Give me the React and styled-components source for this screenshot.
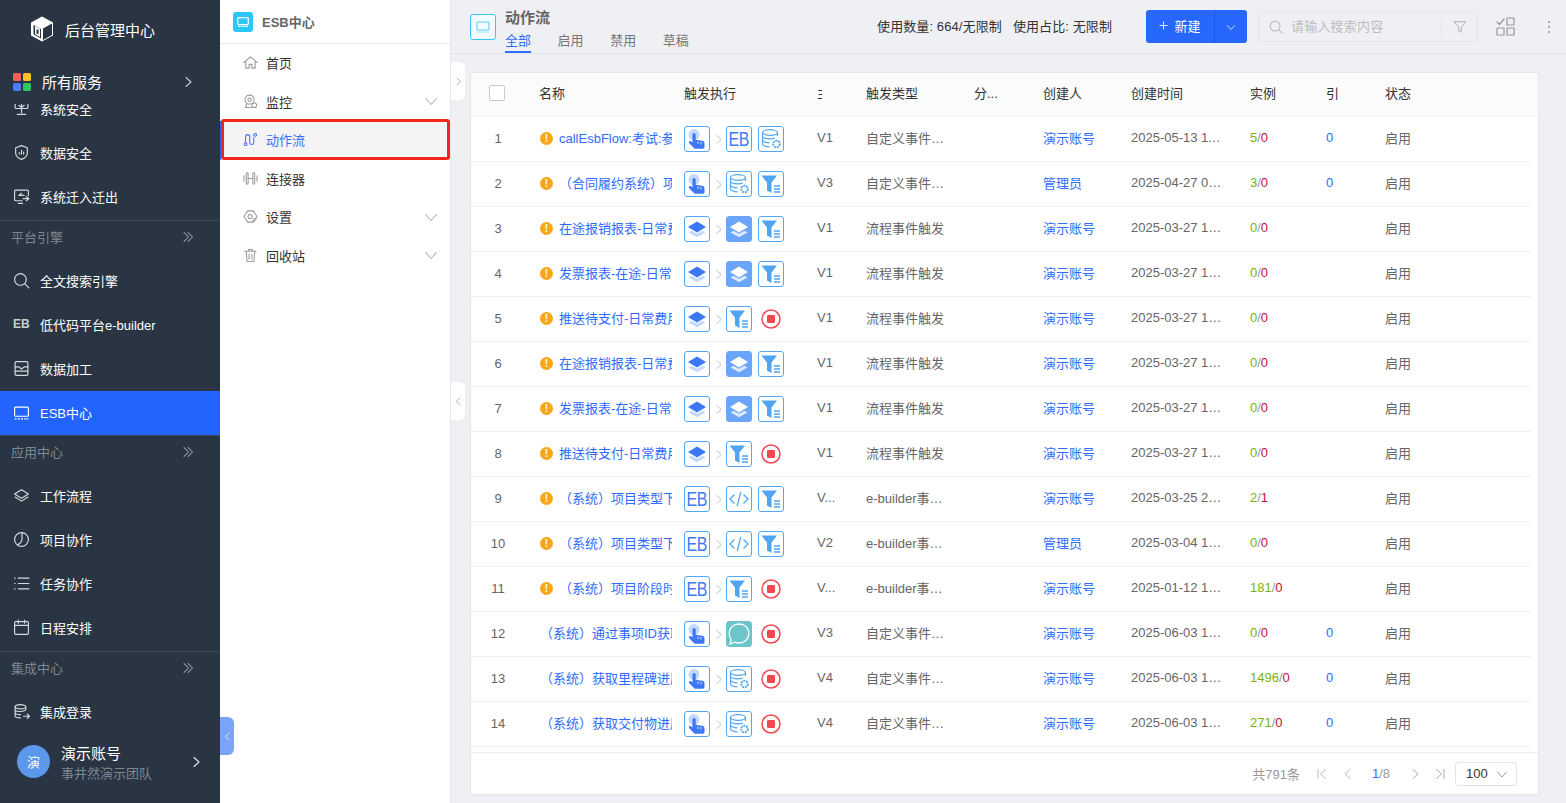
import React from 'react';
import styled, { createGlobalStyle, css } from 'styled-components';

const Global = createGlobalStyle`
  html, body { margin: 0; padding: 0; height: 100%; overflow: hidden; }
  body { font-family: "Liberation Sans", "Noto Sans CJK SC", sans-serif; font-size: 13px; color: #333; }
  * { box-sizing: border-box; }
`;

const Page = styled.div`position: relative; display: flex; width: 1566px; height: 803px; overflow: hidden; background: #eff0f4;`;

/* ---------- primary sidebar ---------- */
const Side = styled.aside`width: 220px; height: 100%; flex: none; display: flex; flex-direction: column; background: #293543; color: #fff;`;
const Brand = styled.div`height: 60px; flex: none; display: flex; align-items: center; gap: 11px; padding: 0 0 0 30px; font-size: 15px; span { padding-bottom: 2px; }`;
const AllServices = styled.div`height: 44px; flex: none; display: flex; align-items: center; padding: 0 26px 0 13px; font-size: 15px; gap: 11px;`;
const Grow = styled.span`flex: 1; padding-bottom: ${p => p.$up || 0}px;`;
const Quad = styled.span`display: grid; grid-template-columns: 8px 8px; gap: 2px; width: 18px; height: 18px;
  i { display: block; border-radius: 1.5px; }`;
const Scroll = styled.nav`flex: 1; min-height: 0; overflow: hidden;`;
const ScrollInner = styled.div`margin-top: -17px;`;
const NavRow = styled.div`height: 44px; display: flex; align-items: center; gap: 10px; padding: 0 0 2px 13px; font-size: 13px; color: #fff;
  ${p => p.$active && css`background: #2364ff;`}`;
const SectionHead = styled.div`height: 39px; margin-top: ${p => p.$mt}px; border-top: 1px solid #3f4a58; display: flex; align-items: center; justify-content: space-between; padding: 0 26px 8px 11px; font-size: 13px; color: #7f8891; svg { margin-top: 2px; }`;
const EbMark = styled.span`width: 17px; font-size: 12px; font-weight: 700; color: #c9ced3; letter-spacing: 0;`;
const User = styled.div`height: 69px; flex: none; display: flex; align-items: center; padding: 0 18px 14px 17px; gap: 11px;`;
const Avatar = styled.span`width: 33px; height: 33px; border-radius: 50%; background: #5b97ea; color: #fff; font-size: 13px; display: flex; align-items: center; justify-content: center;`;
const UserText = styled.div`flex: 1; display: flex; flex-direction: column; gap: 1px; padding-top: 4px;`;
const UserName = styled.span`font-size: 15px; line-height: 20px; color: #fff;`;
const UserTeam = styled.span`font-size: 13px; line-height: 18px; color: #7f8791;`;

/* ---------- secondary sidebar ---------- */
const Sub = styled.aside`width: 231px; height: 100%; flex: none; background: #fff; border-right: 1px solid #e5e6ea;`;
const SubHead = styled.div`height: 44px; border-bottom: 1px solid #e5e6ea; display: flex; align-items: center; gap: 9px; padding: 0 13px; font-size: 13px; font-weight: 700; color: #666;`;
const Tile = styled.span`width: 20px; height: 20px; border-radius: 3px; background: #2cc7f7; display: flex; align-items: center; justify-content: center;`;
const SubRow = styled.div`position: relative; height: 38.5px; display: flex; align-items: center; gap: 8px; padding: 0 12px 1px 23px; font-size: 13px; color: #333;
  ${p => p.$active && css`
    color: #3a6ff7; background: #f4f4f4; box-shadow: inset 1px 0 0 #2364ff;
    &::after { content: ""; position: absolute; inset: -2px 0 0 1px; border: 3px solid #f0261c; border-radius: 3px; }
  `}`;

/* ---------- main ---------- */
const Main = styled.main`flex: 1; min-width: 0; display: flex; flex-direction: column;`;
const Top = styled.header`height: 54px; flex: none; border-bottom: 1px solid #e3e4e9; display: flex; padding-left: 19px;`;
const HeadIcon = styled.span`width: 26px; height: 26px; margin-top: 14px; border: 1px solid #35c8f5; border-radius: 3px; display: flex; align-items: center; justify-content: center; background: #f3fbfe;`;
const TitleCol = styled.div`margin-left: 9px; display: flex; flex-direction: column;`;
const Title = styled.div`height: 22px; padding-top: 8px; line-height: 20px; font-size: 15px; font-weight: 700; color: #666;`;
const Tabs = styled.div`display: flex; gap: 26.6px; margin-top: 6px;`;
const TabItem = styled.span`height: 25px; padding-top: 4px; line-height: 18px; font-size: 13px; color: ${p => p.$on ? '#2f6bff' : '#777'}; border-bottom: 2px solid ${p => p.$on ? '#2f6bff' : 'transparent'};`;
const TopRight = styled.div`margin-left: auto; display: flex; align-items: center;`;
const Stat = styled.span`font-size: 13px; color: #333; margin: 0 11px 3px 0; letter-spacing: .1px; white-space: pre;`;
const SplitBtn = styled.div`display: flex; width: 101px; height: 33px; margin: 0 11px 0 23px; background: #2767fe; color: #fff; border-radius: 3px; overflow: hidden;`;
const BtnMain = styled.span`width: 69px; display: flex; align-items: center; justify-content: center; gap: 6px; padding-bottom: 2px; font-size: 13px; border-right: 1px solid #1d55dc;`;
const BtnCaret = styled.span`flex: 1; display: flex; align-items: center; justify-content: center;`;
const SearchBox = styled.div`width: 220px; height: 31px; border: 1px solid #e4e5e9; border-radius: 3px; display: flex; align-items: center; padding: 0 10px; gap: 8px; font-size: 13px; letter-spacing: .2px; color: #bdbdbd;`;
const SearchSep = styled.i`width: 1px; height: 20px; background: #e4e5e9; margin-right: 3px;`;
const ToolIcons = styled.div`display: flex; align-items: center; width: 88px; padding-left: 18px; gap: 28px;`;

const Content = styled.div`flex: 1; min-height: 0; padding: 18px 27px 8px 19px;`;
const Card = styled.section`height: 100%; background: #fff; border: 1px solid #e5e6ea; display: flex; flex-direction: column;`;
const columns = '60px 145px 133px 49px 108px 69px 88px 119px 76px 59px 1fr';
const HeadRow = styled.div`display: grid; grid-template-columns: ${columns}; height: 44px; align-items: center; background: #fbfbfb; border-bottom: 1px solid #f0f0f0; color: #333; padding-bottom: 5px;`;
const HCell = styled.div`padding-left: 8px; white-space: nowrap; overflow: hidden;
  ${p => p.$clip && css`width: ${p.$clip}px; padding-left: 0; margin-left: 8px;`}`;
const CheckCell = styled.div`display: flex; padding: 2px 0 0 18px;`;
const Check = styled.span`width: 16px; height: 16px; border: 1px solid #c9c9c9; border-radius: 2px; background: #fff;`;
const Rows = styled.div`flex: 1; min-height: 0; overflow: hidden; padding-right: 7px;`;
const Row = styled.div`display: grid; grid-template-columns: ${columns}; height: 45px; align-items: center; border-bottom: 1px solid #f0f0f0; color: #666;`;
const Index = styled.div`text-align: center; padding: 0 6px 2px 0;`;
const NameCell = styled.div`display: flex; align-items: center; gap: 6px; padding: 0 4px 0 9px; min-width: 0; color: #2f6bff;`;
const Warn = styled.span`width: 13px; height: 13px; flex: none; margin-top: -1px; border-radius: 50%; background: #faa61a; color: #fff; font-size: 10px; font-weight: 700; line-height: 13px; text-align: center;`;
const NameText = styled.span`white-space: nowrap; overflow: hidden; flex: 1; padding-bottom: 4px;`;
const Flow = styled.div`display: flex; align-items: center; padding-left: 8px;`;
const Node = styled.span`width: 26px; height: 26px; flex: none; border-radius: 3px; display: flex; align-items: center; justify-content: center; overflow: hidden;
  border: 1px solid ${p => p.$bg || '#55a7ef'}; background: ${p => p.$bg || '#fff'}; margin-right: 6px;`;
const EbText = styled.span`display: inline-block; font-size: 20px; color: #3e7bf5; letter-spacing: -0.5px; transform: scaleX(.8); line-height: 24px;`;
const Arrow = styled.span`width: 16px; margin-left: -6px; margin-right: 0; display: flex; justify-content: center;`;
const Cell = styled.div`padding: 0 ${p => p.$pr || 8}px 4px 8px; white-space: nowrap; overflow: hidden; text-overflow: ellipsis; color: ${p => p.$color || 'inherit'};`;
const Num = styled.span`color: ${p => p.$c};`;
const Foot = styled.footer`height: 42px; flex: none; border-top: 1px solid #ececec; display: flex; align-items: center; justify-content: flex-end; padding-right: 21px; color: #999;`;
const FootBtn = styled.span`display: flex; width: 12px; justify-content: center; margin-left: ${p => p.$ml}px;`;
const PageNo = styled.span`margin-left: 18px; color: #999; b { font-weight: 400; color: #2f6bff; }`;
const PageSelect = styled.div`margin-left: 9px; width: 62px; height: 24px; border: 1px solid #e4e5e9; border-radius: 3px; display: flex; align-items: center; justify-content: space-between; padding: 0 8px 0 10px; color: #333;`;

const Handle = styled.span`position: absolute; left: ${p => p.$x}px; top: ${p => p.$y}px; width: 14px; height: 38px; border-radius: 0 6px 6px 0;
  background: ${p => p.$bg}; display: flex; align-items: center; justify-content: center; z-index: 3;`;

/* ---------- icons ---------- */
const Svg = ({ s = 16, c = '#fff', w = 1.1, vb = 16, children, fill = 'none' }) => (
  <svg width={s} height={s} viewBox={`0 0 ${vb} ${vb}`} fill={fill} stroke={c} strokeWidth={w} strokeLinecap="round" strokeLinejoin="round" style={{ flex: 'none', display: 'block' }}>{children}</svg>
);
const Chev = ({ dir = 'right', s = 12, c = '#c6cbd0', w = 1.1 }) => {
  const d = { right: 'M4 1.5 9 6l-5 4.5', left: 'M8 1.5 3 6l5 4.5', down: 'M1.5 4 6 9l4.500-5' }[dir];
  return <Svg s={s} vb={12} c={c} w={w}><path d={d} /></Svg>;
};
const Dbl = () => <Svg s={12} vb={12} c="#7f8891"><path d="M2 1.5 6.5 6 2 10.5M6 1.5 10.5 6 6 10.5" /></Svg>;

const ic = {
  sys: <><rect x="2" y="1" width="12" height="7" rx="1"/><path d="M8 3v6M5.500 5 8 7l2.500-2M8 9v3M4 13.500h8"/></>,
  shield: <><path d="M8 1.500 13.500 3.500v5c0 3-2.600 5-5.500 6-2.900-1-5.500-3-5.500-6v-5z"/><path d="M6 9.500V8M8 9.500V6M10 9.500V7.500"/></>,
  migrate: <><path d="M14.500 7V3a1 1 0 0 0-1-1h-11a1 1 0 0 0-1 1v8a1 1 0 0 0 1 1h6M5 14.500h4"/><path d="M5.500 7h5M8 5 5.500 7M15 10H9.500M12.500 8l2.500 2-2.500 2"/></>,
  search: <><circle cx="7" cy="7" r="5.500"/><path d="m11 11 4 4"/></>,
  box: <><rect x="2" y="1.500" width="12" height="13" rx="1"/><path d="M2 6.500h3.500l2.500 2 2.500-2H14M2 10.500h12"/></>,
  esb: <><rect x="1.500" y="3" width="13" height="8.500" rx="1"/><path d="M2 14h1M5 14h1M8 14h1M11 14h1M13.500 14h.5"/></>,
  layers: <><path d="M8 2.500 14.500 6.500 8 10.500 1.500 6.500z"/><path d="m2 9.500 6 3.800 6-3.800"/></>,
  clock: <><circle cx="8" cy="8" r="6.500"/><path d="M8.500 1.500V7c0 2.500-1.500 4.500-4 6"/></>,
  list: <><path d="M5 3h10M5 8h10M5 13h10M1.500 3h.5M1.500 8h.5M1.500 13h.5"/></>,
  cal: <><rect x="1.500" y="2.500" width="13" height="12" rx="1"/><path d="M1.500 6h13M5 1v3M11 1v3"/></>,
  login: <><ellipse cx="7" cy="3.500" rx="5" ry="2"/><path d="M2 3.500v2.500c0 1 2 2 5 2s5-1 5-2V3.500M2 6v3c0 1 2 2 5 2M2 9v3c0 1 2 2 5 2M10 12.500h5.500M13.500 10.500l2 2-2 2"/></>,
  home: <><path d="M1 8 8 2l7 6M3 7v7h3.500v-4h3v4H13V7"/></>,
  watch: <><circle cx="7" cy="6" r="4.800"/><circle cx="7" cy="6" r="1.800"/><path d="M4 11 2.500 14.500H9"/><circle cx="12" cy="12" r="2.500"/></>,
  flow: <><circle cx="2.800" cy="13" r="1.500"/><circle cx="13" cy="3" r="1.500"/><path d="M2.800 11.500V5a2.200 2.200 0 0 1 4.400 0v6.500a2.200 2.200 0 0 0 4.300 0V6"/></>,
  conn: <><rect x="3.500" y="2" width="2" height="12" rx="1"/><rect x="10.500" y="2" width="2" height="12" rx="1"/><path d="M5.500 8h5M1 5v6M15 5v6"/></>,
  gear: <><path d="M5 2h6l4 6-4 6H5L1 8z"/><circle cx="7.500" cy="8" r="2.200"/><path d="M11 10.500h3M10 12.500h3"/></>,
  trash: <><path d="M2 3.500h12M6 3.500V1.500h4v2M3.500 3.500l.8 11h7.400l.8-11M6.500 6.500v5.500M9.500 6.500v5.500"/></>,
  monitor: <><rect x="2" y="3" width="12" height="8" rx="1"/><path d="M3 13h1M6 13h1M9 13h1M12 13h1"/></>,
};

const Logo = () => (
  <svg width="24" height="26" viewBox="0 0 24 26" style={{ flex: 'none', marginBottom: 2 }}>
    <path d="M12 0.500 23 6.500v13L12 25.500 1 19.500v-13z" fill="#fff"/>
    <path d="M13 12.500 22 7.500v11.500l-9 5zM3.500 9l7.500 4v9.500L3.500 18.500z" fill="#293543"/>
    <path d="M12 2.500 20 7 12 11.500 4 7z" fill="#fff"/>
    <path d="M5 10l5 2.700v8.300L5 18.300z" fill="#fff"/>
    <rect x="6.500" y="13.500" width="2" height="4.500" fill="#293543"/>
  </svg>
);

const TouchIcon = () => (
  <svg width="24" height="24" viewBox="0 0 24 24">
    <circle cx="9" cy="7.500" r="5.500" fill="#c4d8fb"/>
    <path d="M7.500 7.500a1.600 1.600 0 0 1 3.200 0v5.300l6.300.9c1.500.2 2.500 1.100 2.500 2.500V20c0 1-.7 1.700-1.700 1.700h-7.500c-.6 0-1.100-.2-1.500-.7l-4.500-4.700c-.7-.8-.5-1.700.2-2.100.7-.4 1.400-.2 2 .4l1 .9z" fill="#3c78f5"/>
    <path d="M13 14.500v2.500M16 15v2.500" stroke="#fff" strokeWidth=".8"/>
  </svg>
);
const DbIcon = () => (
  <svg width="24" height="24" viewBox="0 0 24 24" fill="none" stroke="#55a7ef" strokeWidth="1.200">
    <ellipse cx="11" cy="5.500" rx="7.500" ry="2.800"/>
    <path d="M3.500 5.500v3.500c0 1.600 3.400 2.800 7.500 2.800 2 0 3.800-.3 5-.8M18.500 5.500V9M3.500 9v4c0 1.600 3.400 2.800 7 2.800M3.500 13v4c0 1.600 3.400 2.800 7 2.800"/>
    <circle cx="17.500" cy="17" r="3.300" strokeWidth="1.800" strokeDasharray="2 .8"/>
  </svg>
);
const FunnelIcon = () => (
  <svg width="24" height="24" viewBox="0 0 24 24">
    <path d="M2.500 3.500h15.500l-5.500 7v10.500l-4.500-2.500v-8z" fill="#4fa5f2"/>
    <path d="M15 14h6M15 17h6M15 20h6" stroke="#4fa5f2" strokeWidth="1.300"/>
  </svg>
);
const LayerIcon = () => (
  <svg width="24" height="24" viewBox="0 0 24 24">
    <path d="m3.500 15.500 8.500 4.800 8.500-4.800-3-1.700-5.500 3-5.500-3z" fill="#c4d8fb"/>
    <path d="M12 4.500 21 10l-9 5.500L3 10z" fill="#3c78f5"/>
  </svg>
);
const LayerFillIcon = () => (
  <svg width="24" height="24" viewBox="0 0 24 24">
    <path d="m3.500 15.500 8.500 4.800 8.500-4.800-3-1.700-5.500 3-5.500-3z" fill="#dce9fd"/>
    <path d="M12 4.500 21 10l-9 5.500L3 10z" fill="#fff"/>
  </svg>
);
const CodeIcon = () => (
  <svg width="24" height="24" viewBox="0 0 24 24" fill="none" stroke="#55a7ef" strokeWidth="1.300">
    <path d="M7.500 7.500 3 12l4.500 4.500M16.500 7.500 21 12l-4.500 4.500M13.800 5l-3.600 14"/>
  </svg>
);
const ChatIcon = () => (
  <svg width="24" height="24" viewBox="0 0 24 24" fill="none" stroke="#fff" strokeWidth="1.300">
    <path d="M12 2c5.500 0 9.800 3.900 9.800 9.500S17.500 21 12 21c-1.600 0-3-.3-4.200-.8L3 22l1.200-4.200C3 16.300 2.200 14 2.200 11.500 2.200 5.900 6.500 2 12 2z"/>
  </svg>
);
const StopIcon = () => (
  <svg width="26" height="26" viewBox="0 0 26 26" style={{ flex: 'none', display: 'block' }}>
    <circle cx="13" cy="13" r="9" fill="#fff" stroke="#f5474f" strokeWidth="1.500"/>
    <rect x="9" y="9" width="8" height="8" rx="1.200" fill="#f5474f"/>
  </svg>
);

const FlowNode = ({ k }) => {
  if (k === 'stop') return <StopIcon />;
  if (k === 'layerFill') return <Node $bg="#6ba5f9"><LayerFillIcon /></Node>;
  if (k === 'chat') return <Node $bg="#6cc6c9"><ChatIcon /></Node>;
  const map = { touch: <TouchIcon />, db: <DbIcon />, funnel: <FunnelIcon />, layer: <LayerIcon />, code: <CodeIcon />, eb: <EbText>EB</EbText> };
  return <Node>{map[k]}</Node>;
};

const tfull = '2025-03-27 10:12:45';
const a = '演示账号', m = '管理员', cu = '自定义事件触发类型', pr = '流程事件触发', eb = 'e-builder事件触发';
const data = [
  { w: 1, n: 'callEsbFlow:考试:参考人员数据', f: ['touch', 'eb', 'db'], v: 'V1', t: cu, u: a, d: '2025-05-13 11:20:10', g: '5', r: '0', ref: '0' },
  { w: 1, n: '（合同履约系统）项目合同数据同步', f: ['touch', 'db', 'funnel'], v: 'V3', t: cu, u: m, d: '2025-04-27 09:15:33', g: '3', r: '0', ref: '0' },
  { w: 1, n: '在途报销报表-日常费用数据', f: ['layer', 'layerFill', 'funnel'], v: 'V1', t: pr, u: a, d: tfull, g: '0', r: '0' },
  { w: 1, n: '发票报表-在途-日常费用数据', f: ['layer', 'layerFill', 'funnel'], v: 'V1', t: pr, u: a, d: tfull, g: '0', r: '0' },
  { w: 1, n: '推送待支付-日常费用数据', f: ['layer', 'funnel', 'stop'], v: 'V1', t: pr, u: a, d: tfull, g: '0', r: '0' },
  { w: 1, n: '在途报销报表-日常费用数据', f: ['layer', 'layerFill', 'funnel'], v: 'V1', t: pr, u: a, d: tfull, g: '0', r: '0' },
  { w: 1, n: '发票报表-在途-日常费用数据', f: ['layer', 'layerFill', 'funnel'], v: 'V1', t: pr, u: a, d: tfull, g: '0', r: '0' },
  { w: 1, n: '推送待支付-日常费用数据', f: ['layer', 'funnel', 'stop'], v: 'V1', t: pr, u: a, d: tfull, g: '0', r: '0' },
  { w: 1, n: '（系统）项目类型下发数据', f: ['eb', 'code', 'funnel'], v: 'V12', t: eb, u: a, d: '2025-03-25 20:10:02', g: '2', r: '1' },
  { w: 1, n: '（系统）项目类型下发数据', f: ['eb', 'code', 'funnel'], v: 'V2', t: eb, u: m, d: '2025-03-04 10:44:18', g: '0', r: '0' },
  { w: 1, n: '（系统）项目阶段时间数据', f: ['eb', 'funnel', 'stop'], v: 'V12', t: eb, u: a, d: '2025-01-12 16:02:51', g: '181', r: '0' },
  { n: '（系统）通过事项ID获取数据', f: ['touch', 'chat', 'stop'], v: 'V3', t: cu, u: a, d: '2025-06-03 10:30:00', g: '0', r: '0', ref: '0' },
  { n: '（系统）获取里程碑进度', f: ['touch', 'db', 'stop'], v: 'V4', t: cu, u: a, d: '2025-06-03 10:30:00', g: '1496', r: '0', ref: '0' },
  { n: '（系统）获取交付物进度', f: ['touch', 'db', 'stop'], v: 'V4', t: cu, u: a, d: '2025-06-03 10:30:00', g: '271', r: '0', ref: '0' },
];

const NavItem = ({ i, eb: isEb, active, children }) => (
  <NavRow $active={active}>
    {isEb ? <EbMark>EB</EbMark> : <Svg s={17} vb={16} c={active ? '#fff' : '#d5d9dd'}>{ic[i]}</Svg>}
    <span>{children}</span>
  </NavRow>
);
const Section = ({ mt = 1, children }) => <SectionHead $mt={mt}><span>{children}</span><Dbl /></SectionHead>;
const SubItem = ({ i, active, open, children }) => (
  <SubRow $active={active}>
    <Svg s={15} vb={16} c={active ? '#3a6ff7' : '#999'}>{ic[i]}</Svg>
    <Grow>{children}</Grow>
    {open && <Chev dir="down" s={14} c="#b5b5b5" w={.9} />}
  </SubRow>
);

export default function App() {
  return (
    <Page>
      <Global />
      <Side>
        <Brand><Logo /><span>后台管理中心</span></Brand>
        <AllServices>
          <Quad>
            <i style={{ background: '#f25f5c' }} /><i style={{ background: '#fdc21c' }} />
            <i style={{ background: '#4c7cf5' }} /><i style={{ background: '#2fc860' }} />
          </Quad>
          <Grow $up={2}>所有服务</Grow>
          <Chev s={12} />
        </AllServices>
        <Scroll>
          <ScrollInner>
            <NavItem i="sys">系统安全</NavItem>
            <NavItem i="shield">数据安全</NavItem>
            <NavItem i="migrate">系统迁入迁出</NavItem>
            <Section>平台引擎</Section>
            <NavItem i="search">全文搜索引擎</NavItem>
            <NavItem eb>低代码平台e-builder</NavItem>
            <NavItem i="box">数据加工</NavItem>
            <NavItem i="esb" active>ESB中心</NavItem>
            <Section mt={0}>应用中心</Section>
            <NavItem i="layers">工作流程</NavItem>
            <NavItem i="clock">项目协作</NavItem>
            <NavItem i="list">任务协作</NavItem>
            <NavItem i="cal">日程安排</NavItem>
            <Section>集成中心</Section>
            <NavItem i="login">集成登录</NavItem>
          </ScrollInner>
        </Scroll>
        <User>
          <Avatar>演</Avatar>
          <UserText>
            <UserName>演示账号</UserName>
            <UserTeam>事井然演示团队</UserTeam>
          </UserText>
          <Chev s={12} c="#e2e5e8" />
        </User>
      </Side>

      <Sub>
        <SubHead>
          <Tile><Svg s={14} vb={16} c="#fff" w={1.4}>{ic.monitor}</Svg></Tile>
          <span>ESB中心</span>
        </SubHead>
        <SubItem i="home">首页</SubItem>
        <SubItem i="watch" open>监控</SubItem>
        <SubItem i="flow" active>动作流</SubItem>
        <SubItem i="conn">连接器</SubItem>
        <SubItem i="gear" open>设置</SubItem>
        <SubItem i="trash" open>回收站</SubItem>
      </Sub>

      <Main>
        <Top>
          <HeadIcon><Svg s={16} vb={16} c="#5fd2f5" w={1.1}>{ic.monitor}</Svg></HeadIcon>
          <TitleCol>
            <Title>动作流</Title>
            <Tabs>
              <TabItem $on>全部</TabItem>
              <TabItem>启用</TabItem>
              <TabItem>禁用</TabItem>
              <TabItem>草稿</TabItem>
            </Tabs>
          </TitleCol>
          <TopRight>
            <Stat>使用数量: 664/无限制</Stat>
            <Stat>使用占比: 无限制</Stat>
            <SplitBtn>
              <BtnMain><Svg s={9} vb={10} c="#fff" w={1}><path d="M5 1v8M1 5h8" /></Svg>新建</BtnMain>
              <BtnCaret><Chev dir="down" s={10} c="#cfe0ff" /></BtnCaret>
            </SplitBtn>
            <SearchBox>
              <Svg s={14} vb={16} c="#bbb" w={1.2}>{ic.search}</Svg>
              <Grow $up={2}>请输入搜索内容</Grow>
              <SearchSep />
              <Svg s={14} vb={16} c="#aaa" w={1}><path d="M1.500 2h13L9.500 8.500V14l-3-1.500V8.500z" /></Svg>
            </SearchBox>
            <ToolIcons>
              <Svg s={19} vb={19} c="#999" w={1.2}>
                <path d="m1 5 2.500 2.500L8 2" /><rect x="11" y="1" width="7" height="7" /><rect x="1" y="11" width="7" height="7" /><rect x="11" y="11" width="7" height="7" />
              </Svg>
              <Svg s={12} vb={12} c="#888" w={1.8}><path d="M6 1v.1M6 6v.1M6 11v.1" /></Svg>
            </ToolIcons>
          </TopRight>
        </Top>
        <Content>
          <Card>
            <HeadRow>
              <CheckCell><Check /></CheckCell>
              <HCell>名称</HCell>
              <HCell>触发执行</HCell>
              <HCell $clip={5}>主版本</HCell>
              <HCell>触发类型</HCell>
              <HCell>分...</HCell>
              <HCell>创建人</HCell>
              <HCell>创建时间</HCell>
              <HCell>实例</HCell>
              <HCell>引</HCell>
              <HCell>状态</HCell>
            </HeadRow>
            <Rows>
              {data.map((r, idx) => (
                <Row key={idx}>
                  <Index>{idx + 1}</Index>
                  <NameCell>
                    {r.w && <Warn>!</Warn>}
                    <NameText>{r.n}</NameText>
                  </NameCell>
                  <Flow>
                    <FlowNode k={r.f[0]} />
                    <Arrow><Chev s={11} c="#bbb" w={1} /></Arrow>
                    <FlowNode k={r.f[1]} />
                    <FlowNode k={r.f[2]} />
                  </Flow>
                  <Cell>{r.v.length > 2 ? 'V...' : r.v}</Cell>
                  <Cell $pr={12}>{r.t}</Cell>
                  <Cell />
                  <Cell $color="#2f6bff">{r.u}</Cell>
                  <Cell $pr={20}>{r.d}</Cell>
                  <Cell><Num $c="#7cb305">{r.g}</Num><Num $c="#999">/</Num><Num $c="#c30f33">{r.r}</Num></Cell>
                  <Cell $color="#2f6bff">{r.ref || ''}</Cell>
                  <Cell>启用</Cell>
                </Row>
              ))}
            </Rows>
            <Foot>
              <span>共791条</span>
              <FootBtn $ml={16}><Svg s={12} vb={12} c="#bbb" w={1}><path d="M2 1.500v9M9.500 1.500 4.500 6l5 4.500" /></Svg></FootBtn>
              <FootBtn $ml={14}><Chev dir="left" s={12} c="#bbb" w={1} /></FootBtn>
              <PageNo><b>1</b>/8</PageNo>
              <FootBtn $ml={19}><Chev s={12} c="#aaa" w={1} /></FootBtn>
              <FootBtn $ml={13}><Svg s={12} vb={12} c="#aaa" w={1}><path d="M10 1.500v9M2.500 1.500 7.500 6l-5 4.500" /></Svg></FootBtn>
              <PageSelect>100<Chev dir="down" s={12} c="#999" w={1} /></PageSelect>
            </Foot>
          </Card>
        </Content>
      </Main>

      <Handle $x={220} $y={717} $bg="#7aa3fb"><Chev dir="left" s={9} c="#e8eeff" /></Handle>
      <Handle $x={451} $y={62} $bg="#fff"><Chev s={9} c="#aaa" /></Handle>
      <Handle $x={451} $y={382} $bg="#fff"><Chev dir="left" s={9} c="#aaa" /></Handle>
    </Page>
  );
}
